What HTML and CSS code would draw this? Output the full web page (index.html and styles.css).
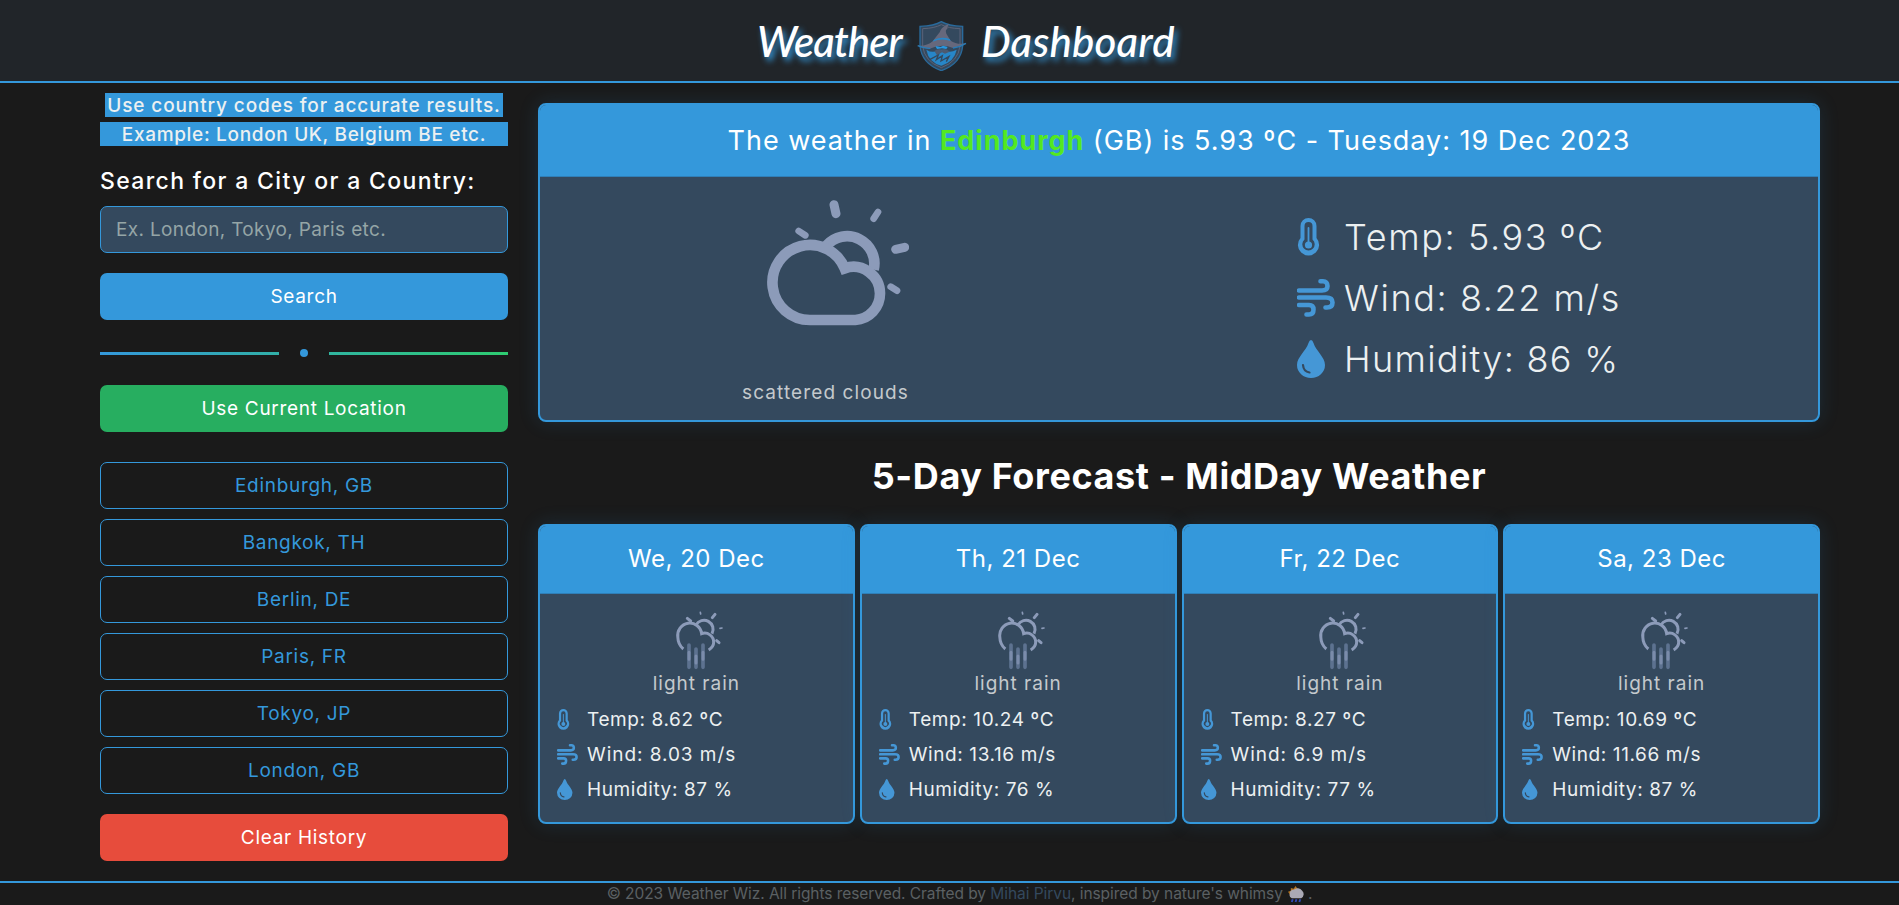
FILE: index.html
```html
<!DOCTYPE html>
<html lang="en">
<head>
<meta charset="utf-8">
<title>Weather Dashboard</title>
<link rel="stylesheet" href="styles.css">
</head>
<body>
<svg class="defs" aria-hidden="true">
  <symbol id="thermo" viewBox="0 0 38 38">
    <path fill="currentColor" fill-rule="evenodd" d="M3.500 8a8 8 0 0 1 16 0V20a10.600 10.600 0 1 1-16 0ZM7.500 8V21.500a6.200 6.200 0 1 0 8 0V8a4 4 0 0 0-8 0Z"/>
    <path d="M11.500 10V26" stroke="currentColor" stroke-width="1.800" stroke-linecap="round"/>
    <circle cx="11.500" cy="27" r="3.600" fill="currentColor"/>
  </symbol>
  <symbol id="wind" viewBox="0 0 38 38">
    <g fill="none" stroke="currentColor" stroke-width="4.600" stroke-linecap="round">
      <path d="M2 11.500H25Q30.500 11.500 30.500 7Q30.500 2.300 26 2.300H23.500"/>
      <path d="M2 18.500H29Q35.500 18.500 35.500 23.500Q35.500 28.500 30 28.500H28.500"/>
      <path d="M2 26H12Q16.500 26 16.500 30.500Q16.500 35.500 12 35.500H9.500"/>
    </g>
  </symbol>
  <symbol id="drop" viewBox="0 0 38 38">
    <path fill="currentColor" d="M14 0Q15.500 0 16.500 3C19 11 28 17 28 25A14 13 0 0 1 0 25C0 17 9 11 11.500 3Q12.500 0 14 0Z"/>
    <path d="M6 25Q6.500 31.500 12.500 32.500" fill="none" stroke="#34495e" stroke-width="2.200" stroke-linecap="round"/>
  </symbol>
  <symbol id="rain" viewBox="405 30 147 180">
    <g fill="none" stroke="#8c9bb9" stroke-linecap="round">
      <g stroke-width="9" stroke-linecap="butt">
        <path d="M468 75A27 27 0 0 1 516 101"/>
        <path d="M430 147Q414 134 413.500 112A36 37 0 0 1 485 101A27 27 0 0 1 521 127Q521 141 506 150"/>
      </g>
      <path stroke-width="5" d="M481 37L482 42M540 85L546 84"/>
      <path stroke-width="9" d="M525 43L517 53M442 55L452 63M530 122L537 128"/>
      <g stroke="#5d7290" stroke-width="11"><path d="M447 135V202M468 147V202M489 135V202"/></g>
      <g stroke="#7b8cab" stroke-width="9"><path d="M447 157V178M468 168V189M489 157V178"/></g>
    </g>
  </symbol>
</svg>

<header class="topbar">
  <h1 class="brand">
    <span class="word w1">Weather</span>
    <svg class="crest" viewBox="0 0 150 150">
      <path d="M73 2Q52 15 9 16V75Q14 128 73 149Q132 128 137 75V16Q94 15 73 2Z" fill="#34495e" stroke="#296a9c" stroke-width="4"/>
      <path d="M73 11Q52 22 17 23V75Q22 121 73 140Q124 121 129 75V23Q94 22 73 11Z" fill="none" stroke="#5b6378" stroke-width="3"/>
      <path d="M28 86Q35 124 73 134Q112 122 119 86Q96 98 84 86L66 86Q48 99 28 86Z" fill="#2786c8"/>
      <path d="M52 90Q64 80 73 88Q86 80 98 92L84 98L75 94L60 103Z" fill="#4c5a70"/>
      <path d="M38 116L64 102L58 116L76 104L72 120L96 106L88 122" fill="none" stroke="#34495e" stroke-width="4"/>
      <path d="M2 74Q30 76 47 61L68 34Q72 18 96 8Q90 18 91 24Q84 26 88 38L101 59Q119 72 147 67Q128 79 108 81Q74 66 38 83Q18 82 2 74Z" fill="#66687c"/>
      <path d="M47 62Q74 50 101 60L98 54Q74 45 51 56Z" fill="#2786c8"/>
      <path d="M55 75L71 78L78 74L92 78L88 84L75 82L60 84Z" fill="#2796df"/>
      <path d="M2 74Q25 83 40 82M108 81Q128 79 147 67" fill="none" stroke="#287bb7" stroke-width="4"/>
    </svg>
    <span class="word w2">Dashboard</span>
  </h1>
</header>

<main class="layout">
  <aside class="sidebar">
    <div class="hints">
      <p class="hint hint-a">Use country codes for accurate results.</p>
      <p class="hint hint-b">Example: London UK, Belgium BE etc.</p>
    </div>
    <label class="label" for="city">Search for a City or a Country:</label>
    <input class="field" id="city" type="text" placeholder="Ex. London, Tokyo, Paris etc.">
    <button class="btn primary">Search</button>
    <div class="divider"><i class="line left"></i><i class="dot"></i><i class="line right"></i></div>
    <button class="btn green">Use Current Location</button>
    <div class="history">
      <button class="btn outline">Edinburgh, GB</button>
      <button class="btn outline">Bangkok, TH</button>
      <button class="btn outline">Berlin, DE</button>
      <button class="btn outline">Paris, FR</button>
      <button class="btn outline">Tokyo, JP</button>
      <button class="btn outline">London, GB</button>
    </div>
    <button class="btn red">Clear History</button>
  </aside>

  <section class="content">
    <article class="card today">
      <h2 class="today-head"><span>The weather in <b>Edinburgh</b> (GB) is 5.93 ºC - Tuesday: 19 Dec 2023</span></h2>
      <div class="today-body">
        <div class="sky">
          <svg class="sky-icon" viewBox="200 300 426 378">
            <g fill="none" stroke="#8c9bb9">
              <g stroke-width="32">
                <path d="M378 437A82 82 0 0 1 520 509"/>
                <path d="M465 660H329A112.500 112.500 0 1 1 433 505A80 80 0 0 1 539 580A78 80 0 0 1 465 660Z" stroke-linejoin="miter"/>
              </g>
              <path stroke-width="27" stroke-linecap="round" d="M401 314L407 341M613 442L586 448"/>
              <path stroke-width="20" stroke-linecap="round" d="M533 336L520 356M295 393L315 406M571 560L590 572"/>
            </g>
          </svg>
          <p class="desc">scattered clouds</p>
        </div>
        <ul class="stats big">
          <li><svg><use href="#thermo"/></svg><span>Temp: 5.93 ºC</span></li>
          <li><svg><use href="#wind"/></svg><span>Wind: 8.22 m/s</span></li>
          <li><svg><use href="#drop"/></svg><span class="humid">Humidity: 86 %</span></li>
        </ul>
      </div>
    </article>

    <h2 class="section-title">5-Day Forecast - MidDay Weather</h2>

    <div class="forecast">
      <article class="card day">
        <h3 class="day-head">We, 20 Dec</h3>
        <svg class="day-icon"><use href="#rain"/></svg>
        <p class="desc">light rain</p>
        <ul class="stats">
          <li><svg><use href="#thermo"/></svg><span>Temp: 8.62 ºC</span></li>
          <li><svg><use href="#wind"/></svg><span class="windy">Wind: 8.03 m/s</span></li>
          <li><svg><use href="#drop"/></svg><span>Humidity: 87 %</span></li>
        </ul>
      </article>
      <article class="card day">
        <h3 class="day-head">Th, 21 Dec</h3>
        <svg class="day-icon"><use href="#rain"/></svg>
        <p class="desc">light rain</p>
        <ul class="stats">
          <li><svg><use href="#thermo"/></svg><span>Temp: 10.24 ºC</span></li>
          <li><svg><use href="#wind"/></svg><span>Wind: 13.16 m/s</span></li>
          <li><svg><use href="#drop"/></svg><span>Humidity: 76 %</span></li>
        </ul>
      </article>
      <article class="card day">
        <h3 class="day-head">Fr, 22 Dec</h3>
        <svg class="day-icon"><use href="#rain"/></svg>
        <p class="desc">light rain</p>
        <ul class="stats">
          <li><svg><use href="#thermo"/></svg><span>Temp: 8.27 ºC</span></li>
          <li><svg><use href="#wind"/></svg><span class="windy">Wind: 6.9 m/s</span></li>
          <li><svg><use href="#drop"/></svg><span>Humidity: 77 %</span></li>
        </ul>
      </article>
      <article class="card day">
        <h3 class="day-head">Sa, 23 Dec</h3>
        <svg class="day-icon"><use href="#rain"/></svg>
        <p class="desc">light rain</p>
        <ul class="stats">
          <li><svg><use href="#thermo"/></svg><span>Temp: 10.69 ºC</span></li>
          <li><svg><use href="#wind"/></svg><span>Wind: 11.66 m/s</span></li>
          <li><svg><use href="#drop"/></svg><span>Humidity: 87 %</span></li>
        </ul>
      </article>
    </div>
  </section>
</main>

<footer class="footer">
  <span>© 2023 Weather Wiz. All rights reserved. Crafted by <a>Mihai Pirvu</a>, inspired by nature's whimsy</span>
  <svg class="cloudlet" viewBox="0 0 18 18">
    <path d="M2 9L0 6L3 5L3 2L6 3L8 0L10 3L12 4L8 10Z" fill="#b37422"/>
    <path d="M4 13A4 4 0 0 1 2 8A4 4 0 0 1 6 4A6 6 0 0 1 15 5A5 5 0 0 1 14 13Z" fill="#aaa9b5"/>
    <path d="M5 14L4 17M9 14L8 17M13 14L12 17" stroke="#3049b8" stroke-width="2"/>
  </svg>
  <span>.</span>
</footer>
</body>
</html>
```

FILE: styles.css
```css
* { box-sizing: border-box; margin: 0; padding: 0; }
body {
  height: 905px;
  overflow: hidden;
  display: flex;
  flex-direction: column;
  background: #1a1a1a;
  color: #fff;
  font-family: Inter, "Noto Sans", sans-serif;
  font-size: 19px;
}
.defs { display: none; }

.topbar {
  height: 83px;
  flex: none;
  background: #212529;
  border-bottom: 2px solid #3498db;
}
.brand {
  height: 81px;
  display: flex;
  justify-content: center;
  align-items: center;
  padding: 11px 0 0 61px;
  font: italic 500 42px/60px Lato, sans-serif;
  text-shadow: 3px 4px 6px #3498db;
}
.word { white-space: nowrap; margin-top: -10px; }
.w1 { width: 160px; letter-spacing: -1px; }
.w2 { width: 222px; letter-spacing: .2px; }
.crest { width: 50px; height: 50px; margin-right: 14px; }

.layout { height: 798px; flex: none; display: flex; padding: 10px 79px 0 100px; gap: 30px; }

.sidebar { width: 408px; display: flex; flex-direction: column; }
.hints { display: flex; flex-direction: column; align-items: center; gap: 5px; }
.hint {
  height: 24px;
  line-height: 25px;
  text-align: center;
  background: #3498db;
  color: #ecf0f1;
  font-weight: 500;
  white-space: nowrap;
}
.hint-a { width: 398px; letter-spacing: .88px; }
.hint-b { width: 408px; letter-spacing: .67px; }
.label { margin-top: 17px; height: 43px; line-height: 36px; font-size: 23px; font-weight: 500; letter-spacing: 1.35px; white-space: nowrap; }
.field {
  height: 47px;
  padding: 0 15px;
  border: 1px solid #3498db;
  border-radius: 7px;
  background: #34495e;
  font: inherit;
  letter-spacing: .35px;
}
.field::placeholder { color: #95a5a6; opacity: 1; }
.btn {
  height: 47px;
  flex: none;
  border: 0;
  border-radius: 7px;
  color: #fff;
  font: inherit;
  letter-spacing: .7px;
}
.primary { margin-top: 20px; background: #3498db; }
.divider { display: flex; align-items: center; justify-content: space-between; height: 8px; margin: 29px 0 28px; }
.line { width: 179px; height: 3px; }
.line.left { background: linear-gradient(90deg, #3498db, #31b0a8); }
.line.right { background: linear-gradient(90deg, #30b5a0, #2ecc71); }
.dot { width: 8px; height: 8px; border-radius: 50%; background: #3498db; }
.green { background: #27ae60; }
.history { display: flex; flex-direction: column; gap: 10px; margin: 30px 0 20px; }
.outline { background: none; border: 1px solid #3498db; color: #3498db; }
.red { background: #e74c3c; }

.content { flex: 1; padding-top: 10px; }
.card {
  border: 2px solid #3498db;
  border-radius: 8px;
  background: #34495e;
  box-shadow: 0 0 20px rgba(52, 152, 219, .16);
  overflow: hidden;
}
.today { height: 319px; }
.today-head {
  height: 72px;
  text-align: center;
  line-height: 71px;
  background: #3498db;
  border-bottom: 1px solid #2f7fb8;
  font-size: 27px;
  font-weight: 400;
  letter-spacing: .97px;
  white-space: nowrap;
}
.today-head b { color: #53e821; font-weight: 700; }
.today-body { display: flex; }
.sky { width: 571px; display: flex; flex-direction: column; align-items: center; padding-top: 23px; }
.sky-icon { width: 142px; height: 126px; margin-left: 25px; }
.desc { color: #c4c9cd; text-align: center; letter-spacing: 1.1px; }
.sky .desc { margin-top: 55px; }

.stats { list-style: none; padding-left: 17px; color: #ecf0f1; }
.stats li { height: 35px; display: flex; align-items: center; white-space: nowrap; letter-spacing: .6px; }
.stats .windy { letter-spacing: .95px; }
.stats svg { width: 21px; height: 21px; margin-right: 9px; color: #4597d6; overflow: visible; }
.stats.big { padding: 29px 0 0 186px; font-size: 36px; }
.stats.big li { height: 61px; font-weight: 300; letter-spacing: 1.6px; }
.big svg { width: 38px; height: 38px; margin-right: 9px; }
.big .humid { letter-spacing: 1.3px; }

.section-title { height: 102px; line-height: 109px; text-align: center; font-size: 36px; font-weight: 700; letter-spacing: .6px; white-space: nowrap; }
.forecast { display: grid; grid-template-columns: repeat(4, 1fr); gap: 5px; }
.day { height: 300px; }
.day-head {
  height: 68px;
  line-height: 66px;
  text-align: center;
  background: #3498db;
  border-bottom: 1px solid #2f7fb8;
  font-size: 24px;
  font-weight: 400;
  letter-spacing: .5px;
}
.day-icon { display: block; width: 49px; height: 60px; margin: 16px auto 0; transform: translateX(3px); }
.day .desc { height: 38px; line-height: 28px; letter-spacing: 1px; }
.day .stats { margin-top: -6px; }

.footer {
  flex: 1;
  display: flex;
  justify-content: center;
  align-items: center;
  gap: 5px;
  padding-left: 20px;
  border-top: 2px solid #3498db;
  color: #5b6063;
  font-size: 15.500px;
  line-height: 20px;
  letter-spacing: -.06px;
  white-space: nowrap;
}
.footer a { color: #34495e; }
.cloudlet { width: 17px; height: 17px; margin-right: -2px; }
```
